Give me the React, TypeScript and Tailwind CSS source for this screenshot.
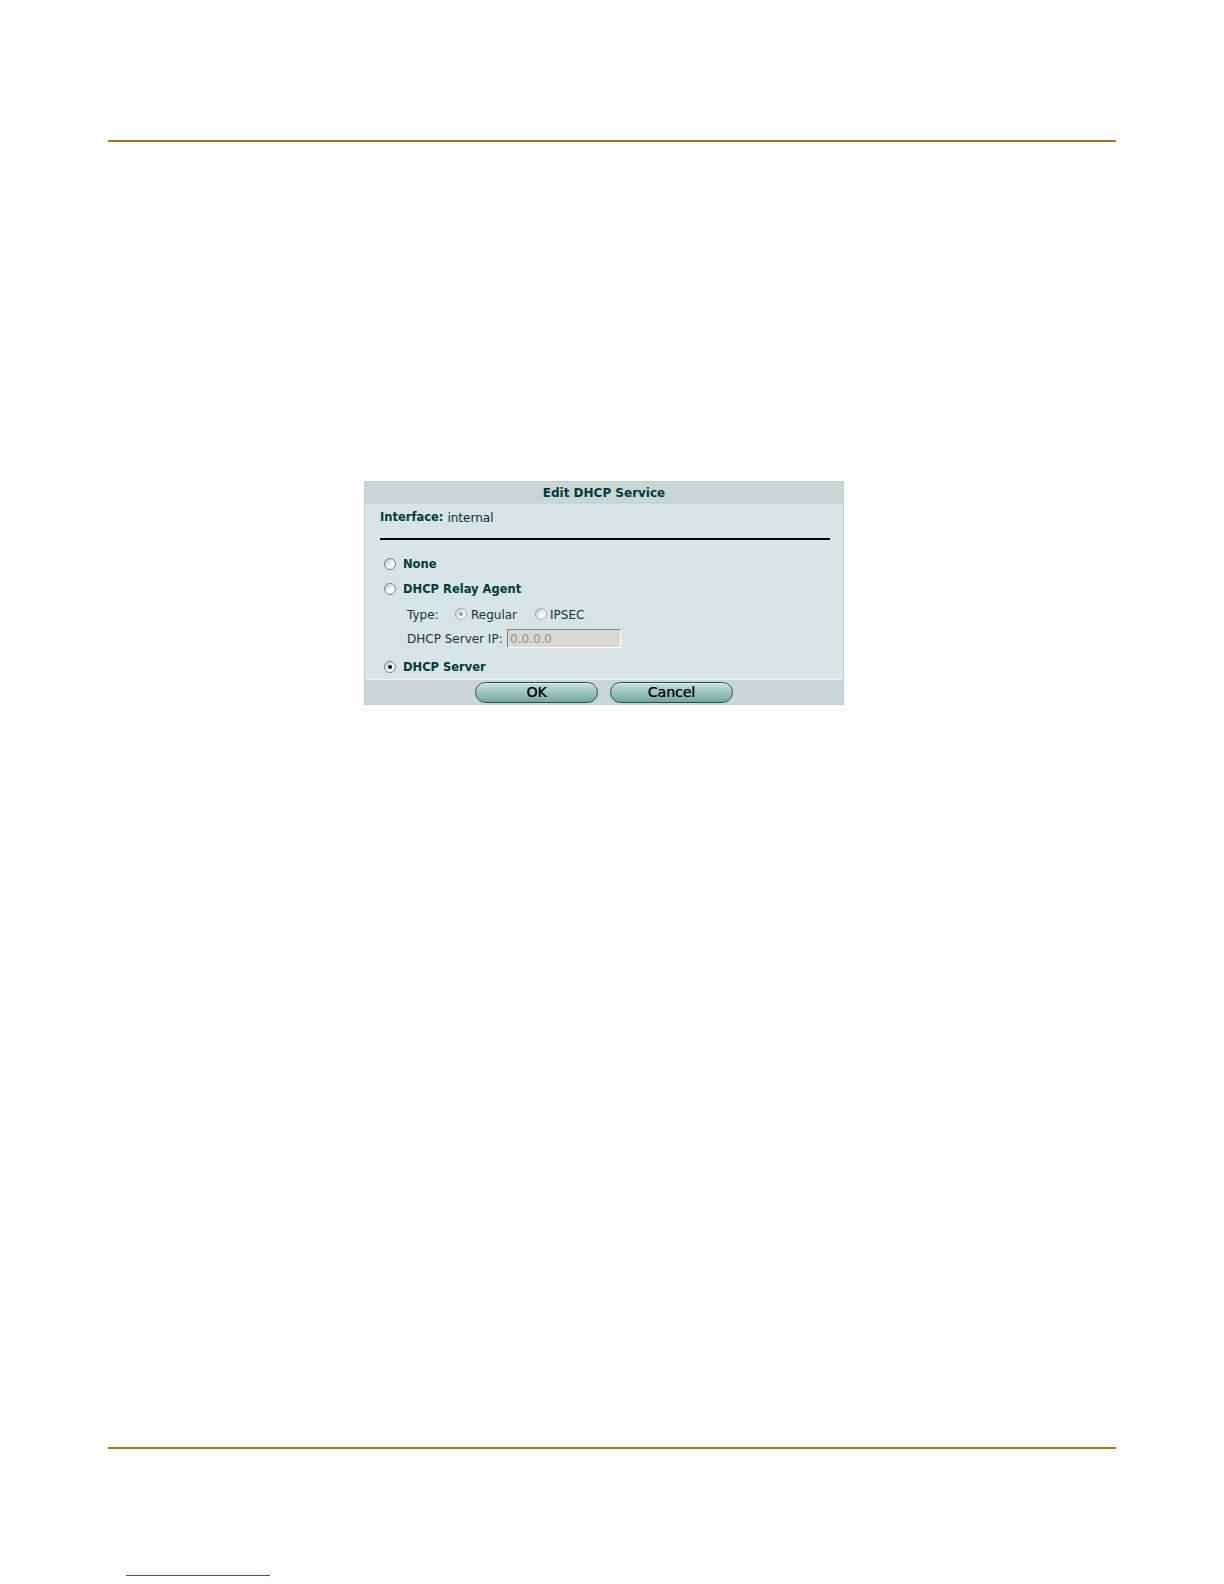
import React from 'react';

const font = { fontFamily: '"DejaVu Sans", Verdana, sans-serif' };

function Radio({ checked = false, disabled = false }: { checked?: boolean; disabled?: boolean }) {
  return (
    <span
      className={`inline-flex items-center justify-center w-[12px] h-[12px] rounded-full border ${
        disabled ? 'border-[#a0abab]' : 'border-[#768484]'
      } bg-gradient-to-br from-[#b8c0c0] via-[#f2f4f4] to-white shrink-0`}
    >
      {checked && (
        <span className={`w-[4px] h-[4px] rounded-full ${disabled ? 'bg-[#9aa2a2]' : 'bg-black'}`} />
      )}
    </span>
  );
}

function PillButton({ label }: { label: string }) {
  return (
    <button
      className="w-[123px] h-[21px] rounded-full border border-[#2e4a46] bg-gradient-to-b from-[#c4e0da] via-[#9cc6bd] to-[#76a79c] text-[14px] leading-none text-[#0a0a0a] shadow-[inset_0_1px_0_#e3f1ee] [text-shadow:0.3px_0_0_#0a0a0a]"
      style={font}
    >
      {label}
    </button>
  );
}

export default function App() {
  return (
    <div className="w-[1224px] h-[1584px] bg-white flex flex-col px-[108px] pt-[140px]" style={font}>
      {/* top rule */}
      <div className="h-[2px] w-[1008px] bg-[#b5701e]" />

      {/* dialog */}
      <div className="mt-[339px] ml-[256px] w-[480px] border border-[#c3cccc] bg-[#d8e5e7] flex flex-col">
        <div className="h-[22px] bg-[#c9d6d6] flex items-center justify-center text-[12px] font-bold text-[#003a38]">
          Edit DHCP Service
        </div>
        <div className="flex flex-col px-[15px]">
          <div className="h-[28px] flex items-center text-[12px] text-[#0c2a2a]">
            <span className="font-bold text-[11.5px] text-[#003a38] mr-[4px]">Interface:</span>
            internal
          </div>
          <div className="mt-[6px] h-[2px] w-[450px] bg-black" />

          <div className="mt-[11px] h-[25px] flex items-center gap-[7px] pl-[4px] text-[11.5px] font-bold text-[#003a38]">
            <Radio />
            <span className="mt-[2px]">None</span>
          </div>
          <div className="h-[25px] flex items-center gap-[7px] pl-[4px] text-[11.5px] font-bold text-[#003a38]">
            <Radio />
            <span className="mt-[2px]">DHCP Relay Agent</span>
          </div>
          <div className="h-[25px] flex items-center pl-[27px] text-[12px] text-[#1a3434]">
            <span className="w-[48px] mt-[2px]">Type:</span>
            <Radio checked disabled />
            <span className="ml-[4px] mt-[2px] w-[64px]">Regular</span>
            <Radio disabled />
            <span className="ml-[3px] mt-[2px]">IPSEC</span>
          </div>
          <div className="h-[25px] flex items-center pl-[27px] text-[12px] text-[#1a3434]">
            <span className="w-[100px]">DHCP Server IP:</span>
            <div className="w-[114px] h-[19px] border border-t-[#7d8585] border-l-[#7d8585] border-r-white border-b-white bg-[#dcd7d2] flex items-center px-[2px] text-[#8e9494]">
              0.0.0.0
            </div>
          </div>
          <div className="mt-[3px] h-[25px] flex items-center gap-[7px] pl-[4px] text-[11.5px] font-bold text-[#003a38]">
            <Radio checked />
            <span className="mt-[2px]">DHCP Server</span>
          </div>
        </div>
        <div className="h-[25px] border-t border-[#eef4f4] bg-[#c9d6d6] flex items-center justify-center gap-[12px]">
          <PillButton label="OK" />
          <PillButton label="Cancel" />
        </div>
      </div>

      {/* bottom rule */}
      <div className="mt-[742px] h-[2px] w-[1008px] bg-[#b5701e]" />

      {/* footer link stub */}
      <div className="mt-[126px] ml-[18px] h-[1px] w-[144px] bg-[#3a4fd0]" />
    </div>
  );
}
